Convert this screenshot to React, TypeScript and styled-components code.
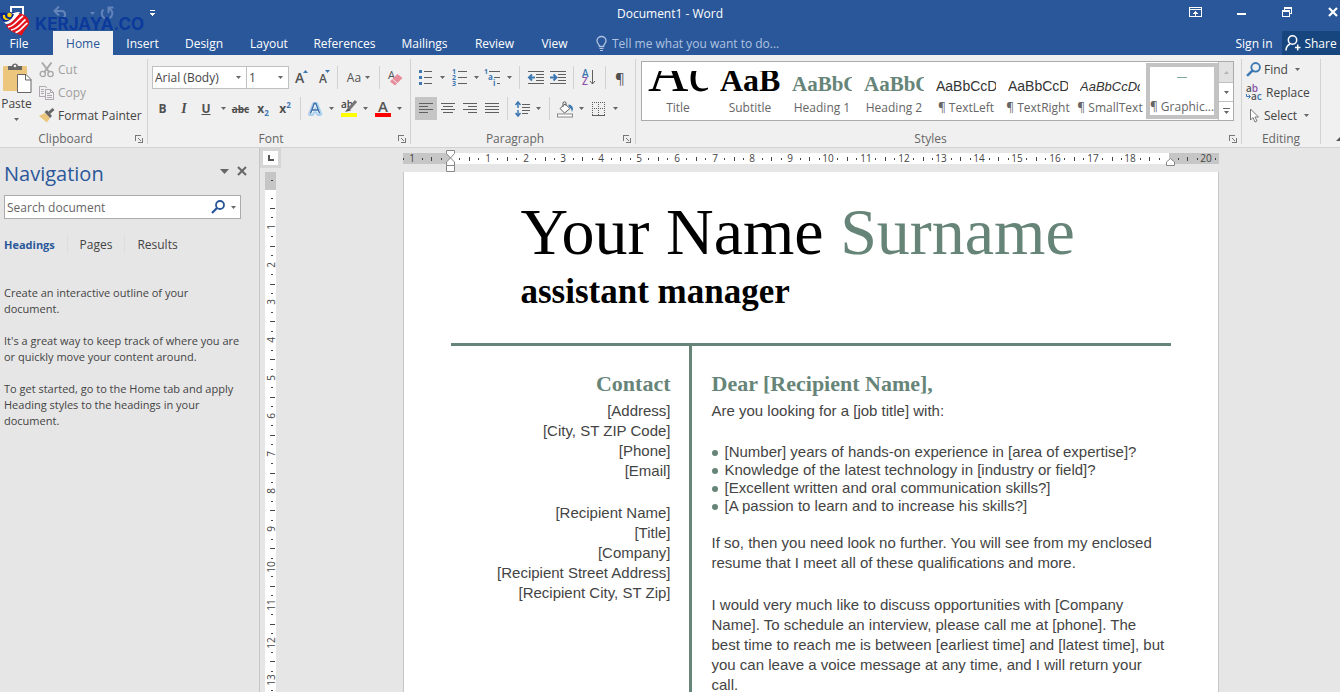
import React from 'react';
import styled, { createGlobalStyle, css } from 'styled-components';

const UI = '"Segoe UI", "Open Sans", "Noto Sans", sans-serif';
const SERIF = 'Georgia, "Liberation Serif", serif';
const SANS = 'Arial, "Liberation Sans", sans-serif';
const BLUE = '#2a579a';
const GREEN = '#668578';
const STEEL = '#3e78b3';
const INK = '#606060';

const GlobalStyle = createGlobalStyle`
  * { box-sizing: border-box; }
  body { margin: 0; font-family: ${UI}; font-size: 12px; color: #444; background: #e6e6e6; }
  button, input, select { font: inherit; color: inherit; }
  p, h1, h2, h3, ul { margin: 0; padding: 0; font-weight: normal; }
`;

const Window = styled.div`
  height: 100vh;
  display: flex;
  flex-direction: column;
  overflow: hidden;
  position: relative;
`;

/* ---------- title bar ---------- */
const plainButton = css`
  border: 0;
  padding: 0;
  background: none;
  display: flex;
  align-items: center;
  justify-content: center;
`;

const TitleBar = styled.header`
  height: 31px;
  flex: none;
  display: grid;
  grid-template-columns: 1fr auto 1fr;
  align-items: start;
  background: ${BLUE};
  color: #fff;
`;

const QuickAccess = styled.div`
  display: flex;
  align-items: center;
  height: 26px;
`;

const WindowControls = styled.div`
  display: flex;
  justify-content: flex-end;
  height: 26px;
`;

const ChromeButton = styled.button<{ $w: number }>`
  ${plainButton}
  width: ${p => p.$w}px;
  height: 24px;
  flex: none;
`;

const CloseButton = styled(ChromeButton)`
  justify-content: flex-end;
  padding-right: 2px;
`;

const DocTitle = styled.div`
  font-size: 12px;
  line-height: 28px;
`;

const Watermark = styled.div`
  position: absolute;
  left: 0;
  top: 11px;
  display: flex;
  align-items: center;
  gap: 5px;
  color: #0b3a9a;
  font: 700 17px/26px Inter, sans-serif;
  pointer-events: none;
`;

/* ---------- tab strip ---------- */
const TabStrip = styled.nav`
  height: 24px;
  flex: none;
  display: flex;
  background: ${BLUE};
  color: #fff;
`;

const Tab = styled.button<{ $w: number; $active?: boolean }>`
  ${plainButton}
  width: ${p => p.$w}px;
  height: 24px;
  background: ${p => (p.$active ? '#f0f0f0' : 'transparent')};
  color: ${p => (p.$active ? BLUE : '#fff')};
`;

const FileTab = styled(Tab)`
  margin-right: 15px;
`;

const TellMe = styled.label`
  flex: 1;
  display: flex;
  align-items: center;
  gap: 5px;
  padding-left: 14px;
  input {
    flex: 1;
    border: 0;
    padding: 0;
    background: none;
    outline: 0;
  }
  input::placeholder { color: #b0c3e0; opacity: 1; }
`;

const ShareButton = styled.button`
  ${plainButton}
  gap: 3px;
  width: 58px;
  background: #17457e;
  color: #fff;
`;

/* ---------- ribbon ---------- */
const Ribbon = styled.section`
  flex: none;
  height: 93px;
  display: flex;
  padding-top: 4px;
  background: #f0f0f0;
  border-bottom: 1px solid #d2d2d2;
`;

const Group = styled.div<{ $w?: number }>`
  ${p => (p.$w ? `width: ${p.$w}px; flex: none;` : 'flex: 1; min-width: 0;')}
  display: flex;
  flex-direction: column;
  height: 85px;
  border-right: 1px solid #d2d2d2;
`;

const GroupBody = styled.div`
  flex: 1;
  min-height: 0;
  display: flex;
`;

const GroupFooter = styled.div`
  height: 12px;
  display: flex;
  align-items: center;
  color: #666;
  margin-bottom: -1px;
  span { flex: 1; text-align: center; line-height: 12px; }
`;

const Launcher = styled.button`
  ${plainButton}
  width: 16px;
  height: 12px;
`;

const ToolRows = styled.div`
  padding: 7px 0 0 4px;
  display: flex;
  flex-direction: column;
  gap: 8px;
`;

const ToolRow = styled.div`
  height: 23px;
  display: flex;
  align-items: stretch;
`;

const Tool = styled.button<{ $w: number; $on?: boolean }>`
  ${plainButton}
  width: ${p => p.$w}px;
  gap: 4px;
  background: ${p => (p.$on ? '#c5c5c5' : 'none')};
`;

const Divider = styled.span<{ $w: number }>`
  width: ${p => p.$w}px;
  display: flex;
  justify-content: center;
  &::before { content: ''; width: 1px; background: #d2d2d2; }
`;

const Glyph = styled.span<{ $size?: number; $bold?: boolean; $italic?: boolean; $line?: string; $serif?: boolean }>`
  font-size: ${p => p.$size ?? 12}px;
  line-height: 16px;
  font-weight: ${p => (p.$bold ? 700 : 400)};
  font-style: ${p => (p.$italic ? 'italic' : 'normal')};
  text-decoration: ${p => p.$line ?? 'none'};
  font-family: ${p => (p.$serif ? '"Liberation Serif", serif' : 'inherit')};
  color: #505050;
  sub, sup { font-size: 8px; line-height: 0; color: ${STEEL}; }
`;

const Combo = styled.div<{ $w: number }>`
  width: ${p => p.$w}px;
  display: flex;
  align-items: center;
  padding-right: 5px;
  background: #fff;
  border: 1px solid #c0c0c0;
  & + & { margin-left: -1px; }
  select {
    appearance: none;
    flex: 1;
    min-width: 0;
    border: 0;
    background: none;
    padding: 0 0 0 2px;
    outline: 0;
  }
`;

const PasteButton = styled.button`
  ${plainButton}
  flex-direction: column;
  justify-content: flex-start;
  width: 35px;
  padding: 4px 2px 0 0;
  line-height: 16px;
  svg + span { margin: 3px 0 6px; }
`;

const StackedTools = styled.div`
  display: flex;
  flex-direction: column;
  padding-left: 4px;
  margin-top: -1px;
`;

const LabeledTool = styled.button<{ $dim?: boolean }>`
  ${plainButton}
  justify-content: flex-start;
  gap: 3px;
  height: 23px;
  white-space: nowrap;
  color: ${p => (p.$dim ? '#a0a0a0' : '#444')};
  svg:last-child:not(:first-child) { margin-left: 4px; }
`;

/* ---------- style gallery ---------- */
const Gallery = styled.div`
  flex: 1;
  min-width: 0;
  height: 60px;
  display: flex;
  margin: 2px 7px 0 5px;
  background: #fff;
  border: 1px solid #ababab;
`;

const StyleList = styled.div`
  flex: 1;
  min-width: 0;
  display: flex;
  overflow: hidden;
`;

const StyleCard = styled.button<{ $on?: boolean }>`
  ${plainButton}
  flex-direction: column;
  justify-content: flex-end;
  width: 72px;
  flex: none;
  padding: 0 ${p => (p.$on ? 1 : 5)}px ${p => (p.$on ? 0 : 4)}px;
  margin: ${p => (p.$on ? '1px 0' : '0')};
  border: ${p => (p.$on ? '4px solid #c3c3c3' : '0')};
  color: #666;
  white-space: nowrap;
`;

const Preview = styled.span<{ $size: number; $color: string; $serif?: boolean; $bold?: boolean; $italic?: boolean }>`
  width: 60px;
  height: 24px;
  overflow: hidden;
  display: flex;
  align-items: flex-end;
  font-family: ${p => (p.$serif ? SERIF : SANS)};
  font-size: ${p => p.$size}px;
  font-weight: ${p => (p.$bold ? 700 : 400)};
  font-style: ${p => (p.$italic ? 'italic' : 'normal')};
  line-height: ${p => Math.round(p.$size * 0.68) + 8}px;
  color: ${p => p.$color};
`;

const StyleName = styled.span`
  line-height: 16px;
  margin-top: 5px;
`;

const GalleryScroll = styled.div`
  width: 15px;
  display: grid;
  grid-template-rows: 20px 19px 19px;
  border-left: 1px solid #c0c0c0;
`;

const ScrollButton = styled.button<{ $off?: boolean }>`
  ${plainButton}
  background: ${p => (p.$off ? '#e1e1e1' : '#fff')};
  & + & { border-top: 1px solid #c0c0c0; }
`;

const RibbonEnd = styled.div`
  width: 19px;
  display: flex;
  align-items: flex-end;
  justify-content: flex-end;
  padding-bottom: 6px;
`;

/* ---------- work area ---------- */
const Workspace = styled.main`
  flex: 1;
  min-height: 0;
  display: flex;
  background: #e6e6e6;
`;

const NavPane = styled.aside`
  width: 260px;
  flex: none;
  padding: 11px 8px 0 4px;
  border-right: 1px solid #c6c6c6;
`;

const NavHeader = styled.div`
  display: flex;
  align-items: center;
  height: 30px;
  h2 { flex: 1; font-size: 20px; font-weight: 400; line-height: 30px; color: ${BLUE}; }
`;

const NavIcon = styled.button`
  ${plainButton}
  width: 18px;
  height: 18px;
  margin-bottom: 6px;
`;

const SearchBox = styled.div`
  display: flex;
  align-items: center;
  height: 24px;
  margin: 6px 10px 0 0;
  padding: 0 4px 0 2px;
  background: #fff;
  border: 1px solid #ababab;
  input { flex: 1; min-width: 0; border: 0; padding: 0; outline: 0; background: none; }
  input::placeholder { color: #666; opacity: 1; }
`;

const SearchButton = styled.button`
  ${plainButton}
  margin-right: 6px;
`;

const NavTabs = styled.div`
  display: flex;
  margin: 15px 0 31px;
  height: 20px;
`;

const NavTab = styled.button<{ $w: number; $active?: boolean }>`
  ${plainButton}
  width: ${p => p.$w}px;
  justify-content: ${p => (p.$active ? 'flex-start' : 'center')};
  color: ${p => (p.$active ? BLUE : '#444')};
  font-size: ${p => (p.$active ? 11 : 12)}px;
  font-weight: ${p => (p.$active ? 700 : 400)};
  & + & { border-left: 1px solid #dedede; }
`;

const NavText = styled.p`
  font-size: 11px;
  line-height: 16px;
  margin: 0 8px 16px 0;
`;

const RulerColumn = styled.div`
  width: 21px;
  flex: none;
  display: flex;
  flex-direction: column;
  align-items: center;
`;

const TabStop = styled.button`
  ${plainButton}
  width: 21px;
  height: 20px;
  flex: none;
  margin-bottom: 4px;
  border: 3px solid #d6d6d6;
  background: #fdfdfd;
`;

const VerticalRuler = styled.div`
  flex: 1;
  min-height: 0;
  overflow: hidden;
  svg { display: block; }
`;

const Canvas = styled.div`
  flex: 1;
  min-width: 0;
  display: flex;
  flex-direction: column;
  align-items: center;
`;

const HorizontalRuler = styled.div`
  flex: none;
  height: 24px;
  padding-top: 2px;
  svg { display: block; }
`;

const Page = styled.article`
  flex: 1 0 auto;
  width: 816px;
  padding: 23px 47px 0;
  background: #fff;
  border: solid #c6c6c6;
  border-width: 0 1px;
  font-family: ${SANS};
  font-size: 15px;
  line-height: 20px;
`;

const NameLine = styled.h1`
  padding-left: 70px;
  font-family: ${SERIF};
  font-size: 66px;
  line-height: 74px;
  color: #000;
  white-space: nowrap;
  span { color: ${GREEN}; }
`;

const RoleLine = styled.h2`
  padding-left: 70px;
  margin-top: 2px;
  font-family: ${SERIF};
  font-size: 35px;
  font-weight: 700;
  line-height: 42px;
  color: #000;
`;

const Columns = styled.div`
  display: grid;
  grid-template-columns: 241px 1fr;
  margin-top: 30px;
  border-top: 3px solid ${GREEN};
`;

const ContactColumn = styled.section`
  padding: 25px 18px 0 0;
  min-height: 360px;
  border-right: 3px solid ${GREEN};
  text-align: right;
`;

const LetterColumn = styled.section`
  padding: 25px 4px 0 20px;
`;

const SectionHeading = styled.h3`
  font-family: ${SERIF};
  font-size: 22px;
  font-weight: 700;
  line-height: 25px;
  margin-bottom: 5px;
  color: ${GREEN};
`;

const Block = styled.p`
  margin-bottom: 22px;
  white-space: pre-line;
`;

const BulletList = styled.ul`
  list-style: none;
  line-height: 18px;
  margin-bottom: 18px;
  li { display: flex; align-items: center; gap: 7px; }
  li::before { content: ''; width: 6px; height: 6px; margin-top: 2px; border-radius: 3px; background: ${GREEN}; }
`;

/* ---------- icons ---------- */
const Drawing = styled.svg`
  flex: none;
  overflow: visible;
`;

type IconProps = { w: number; h: number; children: React.ReactNode; crisp?: boolean };
const Icon = ({ w, h, children, crisp }: IconProps) => (
  <Drawing width={w} height={h} viewBox={`0 0 ${w} ${h}`} fill="none" aria-hidden="true" shapeRendering={crisp ? 'crispEdges' : undefined}>
    {children}
  </Drawing>
);

const Caret = ({ color = '#666', w = 5 }: { color?: string; w?: number }) => {
  const h = Math.ceil(w / 2);
  return <Icon w={w} h={h}><path d={`M0 0H${w}L${w / 2} ${h}Z`} fill={color} /></Icon>;
};

const LauncherIcon = () => (
  <Icon w={8} h={8} crisp>
    <path d="M0.500 6V0.500H6" stroke="#777" />
    <path d="M3 3L6 6M7.500 3V7.500H3" stroke="#777" />
  </Icon>
);

const FlagLogo = () => (
  <Icon w={30} h={26}>
    <path d="M6 14C12 13 15 6 20 2.500C25 3 30 8 29 13C27 17 24 19 22 24.500C18 23 9 21 6 14Z" fill="#e3131b" />
    <path d="M8 16C15 15 18 8 23 5M11 19C18 18 21 12 25.500 8.500M15.500 21.500C21 20 23 15 27.500 12" stroke="#fff" strokeWidth="1.600" />
    <path d="M0 2C5 0 9 4 12 1L17 2C14 7 11 12 5 11C2 9 0 7 0 2Z" fill="#10298e" />
    <path d="M11 2C14 3 17 0 20 1.500C16 5 13 13 6 13L4 11C10 11 13 6 14 3.500Z" fill="#fff" />
    <path d="M3 4C2 9 7 10 10 8C7 8 5 7 5 4Z" fill="#ffd500" />
    <circle cx="9.500" cy="4" r="2.300" fill="#ffd500" />
  </Icon>
);

const SaveIcon = () => (
  <Icon w={14} h={14} crisp>
    <path d="M1 1H13V13H3L1 11Z" stroke="#fff" strokeWidth="2" />
    <path d="M4 8H10V13H4Z" fill="#fff" />
  </Icon>
);

const UndoIcon = () => (
  <Icon w={15} h={14}>
    <path d="M1.500 5H9.500A4 4 0 0 1 9.500 12.500H8M6 0.500L1.500 5L6 9.500" stroke="#6284ba" strokeWidth="2" />
  </Icon>
);

const RedoIcon = () => (
  <Icon w={14} h={14}>
    <path d="M9.500 2.700A5.300 5.300 0 1 1 3.500 3.500M8.500 7V1.500H13.500" stroke="#6284ba" strokeWidth="2" />
  </Icon>
);

const CustomizeIcon = () => (
  <Icon w={5} h={6} crisp><path d="M0 0H5V1H0Z" fill="#fff" /><path d="M0 3H5L2.500 6Z" fill="#fff" /></Icon>
);

const PasteIcon = () => (
  <Icon w={29} h={30}>
    <rect x="1" y="3" width="24" height="25" rx="1" fill="#ebc67c" />
    <path d="M6 7V3H10C10 -0.500 16 -0.500 16 3H20V7Z" fill="#666" />
    <circle cx="13" cy="3" r="1.300" fill="#f0f0f0" />
    <path d="M15.500 11.500H24L29 16.500V29.500H15.500Z" fill="#fff" stroke="#666" />
    <path d="M23.500 11.500V17H29" stroke="#666" />
  </Icon>
);

const CutIcon = () => (
  <Icon w={16} h={16}>
    <path d="M3 0.500L10.500 10.500M12.500 0.500L5 10.500" stroke="#a8a8a8" strokeWidth="2" />
    <circle cx="3.800" cy="12" r="2.600" stroke="#a8a8a8" strokeWidth="1.400" />
    <circle cx="11.500" cy="12" r="2.600" stroke="#a8a8a8" strokeWidth="1.400" />
  </Icon>
);

const CopyIcon = () => (
  <Icon w={16} h={16} crisp>
    <path d="M5.500 11.500H0.500V1.500H6.500L8.500 3.500" stroke="#b0a8b0" />
    <path d="M2 4.500H5M2 6.500H5M2 8.500H5" stroke="#b0a8b0" />
    <path d="M6.500 4.500H11.500L14.500 7.500V14.500H6.500ZM11.500 4.500V7.500H14.500M8 8.500H11M8 10.500H13M8 12.500H13" stroke="#b0a8b0" />
  </Icon>
);

const PainterIcon = () => (
  <Icon w={16} h={15}>
    <path d="M0 8L6 5L11 10L8 14.500Z" fill="#ebc67c" />
    <path d="M5.500 4L8 2L13 8L11 10Z" fill="#666" />
    <path d="M10 5L14.500 1" stroke="#666" strokeWidth="3" />
  </Icon>
);

const GrowIcon = ({ up }: { up?: boolean }) => (
  <Icon w={up ? 13 : 11} h={15}>
    <text x="0" y="13" fontFamily="Open Sans, sans-serif" fontSize={up ? 14 : 12} fontWeight="600" fill="#555">A</text>
    <path d={up ? 'M8 3H13L10.500 0Z' : 'M6 0H11L8.500 3Z'} fill={STEEL} />
  </Icon>
);

const ClearIcon = () => (
  <Icon w={16} h={16}>
    <text x="1" y="9" fontFamily="Open Sans, sans-serif" fontSize="11" fill="#555">A</text>
    <path d="M10.500 4L15.500 8L8 15.500L3 11.500Z" fill="#e88b9b" />
    <path d="M5.500 9L10.500 13.500" stroke="#f0f0f0" />
  </Icon>
);

const EffectsIcon = () => (
  <Icon w={14} h={17}>
    <text x="2" y="14" fontFamily="Open Sans, sans-serif" fontSize="15" fontWeight="600" fill="#fff" stroke="#a9cdec" strokeWidth="4" strokeLinejoin="round" paintOrder="stroke">A</text>
    <path d="M2.500 13.500L6.300 3.500H7.800L11.600 13.500M4 10H10" stroke="#3a6da6" strokeWidth="1.300" />
  </Icon>
);

const HighlightIcon = () => (
  <Icon w={16} h={17}>
    <text x="0" y="8" fontFamily="Open Sans, sans-serif" fontSize="10" fontWeight="600" fill="#444">ab</text>
    <path d="M15 1L8 9" stroke="#777" strokeWidth="3" />
    <path d="M7 8L4 12L10 10.500Z" fill="#555" />
    <rect y="13" width="16" height="4" fill="#ff0" />
  </Icon>
);

const FontColorIcon = () => (
  <Icon w={16} h={17}>
    <text x="3" y="12" fontFamily="Open Sans, sans-serif" fontSize="15" fontWeight="600" fill="#555">A</text>
    <rect y="13" width="16" height="4" fill="#f00" />
  </Icon>
);

const BulletsIcon = () => (
  <Icon w={14} h={16} crisp>
    <path d="M0 0H3V3H0ZM0 6H3V9H0ZM0 12H3V15H0Z" fill={STEEL} />
    <path d="M5 1.500H13M5 7.500H13M5 13.500H13" stroke={INK} />
  </Icon>
);

const NumberingIcon = () => (
  <Icon w={15} h={17}>
    {[1, 2, 3].map(n => (
      <text key={n} x="0" y={n * 6 - 1} fontFamily="Open Sans, sans-serif" fontSize="7" fontWeight="700" fill={STEEL}>{n}</text>
    ))}
    <path d="M6 2.500H15M6 8.500H15M6 14.500H15" stroke={INK} shapeRendering="crispEdges" />
  </Icon>
);

const MultilevelIcon = () => (
  <Icon w={17} h={17}>
    <text x="0" y="5" fontFamily="Open Sans, sans-serif" fontSize="7" fontWeight="700" fill={STEEL}>1</text>
    <text x="4" y="11" fontFamily="Open Sans, sans-serif" fontSize="8" fontWeight="700" fill={STEEL}>a</text>
    <text x="9" y="17" fontFamily="Open Sans, sans-serif" fontSize="8" fontWeight="700" fill={STEEL}>i</text>
    <path d="M5 2.500H16M10 8.500H16M13 14.500H16" stroke={INK} shapeRendering="crispEdges" />
  </Icon>
);

const IndentIcon = ({ out }: { out?: boolean }) => (
  <Icon w={16} h={14} crisp>
    <path d="M0 0.500H16M8 3.500H16M8 6.500H16M8 9.500H16M0 12.500H16" stroke={INK} />
    <g shapeRendering="auto">
      <path d={out ? 'M7 6.500H1M4 3.500L1 6.500L4 9.500' : 'M0 6.500H6M3.500 3.500L6.500 6.500L3.500 9.500'} stroke={STEEL} strokeWidth="2" />
    </g>
  </Icon>
);

const SortIcon = () => (
  <Icon w={14} h={17}>
    <text x="0" y="8" fontFamily="Open Sans, sans-serif" fontSize="10" fontWeight="600" fill={STEEL}>A</text>
    <text x="0" y="16" fontFamily="Open Sans, sans-serif" fontSize="10" fontWeight="600" fill="#8a50a8">Z</text>
    <path d="M10.500 1V15M8 12L10.500 15L13 12" stroke={INK} />
  </Icon>
);

const AlignIcon = ({ rows }: { rows: [number, number][] }) => (
  <Icon w={14} h={12} crisp>
    {rows.map(([x, w], i) => <path key={i} d={`M${x} ${i * 3 + 0.5}h${w}`} stroke={INK} />)}
  </Icon>
);

const SpacingIcon = () => (
  <Icon w={15} h={16}>
    <path d="M3 1V7M3 9V15M0.500 4L3 1L5.500 4M0.500 12L3 15L5.500 12" stroke={STEEL} strokeWidth="1.500" />
    <path d="M7 3.500H15M7 6.500H15M7 9.500H15M7 12.500H13" stroke={INK} shapeRendering="crispEdges" />
  </Icon>
);

const ShadingIcon = () => (
  <Icon w={17} h={16}>
    <path d="M8 3L13 7.500L7.500 12L3 7.500Z" fill="#fff" stroke={INK} />
    <path d="M6 6V1.500Q7.500 0 9 1.500V5" stroke={INK} />
    <path d="M11.500 3.500C16 4 17 7.500 15 11C14.500 8.500 13.500 6.500 11.500 5.500Z" fill={STEEL} />
    <rect x="0.500" y="13" width="15" height="3" fill="#fff" stroke="#888" />
  </Icon>
);

const BordersIcon = () => (
  <Icon w={13} h={14} crisp>
    <path d="M0 0.500H13M0 6.500H13M0.500 0V13M6.500 0V13M12.500 0V13" stroke={INK} strokeDasharray="1 1" />
    <path d="M0 13.500H13" stroke={INK} />
  </Icon>
);

const MagnifierIcon = ({ color, size = 14 }: { color: string; size?: number }) => (
  <svg width={size} height={size} viewBox="0 0 14 14" fill="none" aria-hidden="true">
    <circle cx="9" cy="5" r="4" stroke={color} strokeWidth="1.800" />
    <path d="M6 8L1 13" stroke={color} strokeWidth="2.300" />
  </svg>
);

const ReplaceIcon = () => (
  <Icon w={17} h={16}>
    <text x="0" y="7" fontFamily="Open Sans, sans-serif" fontSize="10" fontWeight="600" fill="#555">a<tspan fill="#8a50a8">b</tspan></text>
    <text x="5" y="15" fontFamily="Open Sans, sans-serif" fontSize="10" fontWeight="600" fill="#555">a<tspan fill={STEEL}>c</tspan></text>
    <path d="M0.500 9V11.500H4M2.500 9.500L4.500 11.500L2.500 13.500" stroke={STEEL} />
  </Icon>
);

const CursorIcon = () => (
  <Icon w={15} h={15}>
    <path d="M4.500 1V12L7 9.500L9 14L11 13L9 9H12.500Z" fill="#fff" stroke="#777" />
  </Icon>
);

const BulbIcon = () => (
  <Icon w={11} h={15}>
    <path d="M3.500 10.500C3.500 8.500 1 7.500 1 4.700A4.500 4.200 0 0 1 10 4.700C10 7.500 7.500 8.500 7.500 10.500Z" stroke="#b0c3e0" strokeWidth="1.300" />
    <path d="M3.500 12.500H7.500M4 14.500H7" stroke="#b0c3e0" />
  </Icon>
);

const PersonIcon = () => (
  <Icon w={16} h={16}>
    <circle cx="7.500" cy="5" r="4.200" stroke="#fff" strokeWidth="1.500" />
    <path d="M1 15.500C1 12 3 10 5 9M10 12.500H15.500M12.700 9.500V15.500" stroke="#fff" strokeWidth="1.500" />
  </Icon>
);

/* ---------- rulers ---------- */
const CM = 37.8;
const rulerFont = { fontFamily: 'Open Sans, sans-serif', fontSize: 10, fill: '#444', textAnchor: 'middle' as const };

function PageRuler() {
  const marks = Array.from({ length: 88 }, (_, i) => i - 5);
  return (
    <svg width="816" height="22" viewBox="0 0 816 22" aria-hidden="true">
      <rect y="3" width="816" height="11" fill="#c6c6c6" />
      <rect x="48" y="3" width="718" height="11" fill="#fff" />
      {marks.map(q => {
        const x = Math.round(47 + (q * CM) / 4);
        if (x > 813 || x < 0) return null;
        if (q % 4 === 0) {
          const n = Math.abs(q / 4);
          return n === 0 || n === 19 ? null : <text key={q} x={x} y="12" {...rulerFont}>{n}</text>;
        }
        return q % 2 === 0
          ? <rect key={q} x={x} y="7" width="1" height="4" fill="#444" />
          : <rect key={q} x={x} y="8" width="1" height="2" fill="#444" />;
      })}
      <path d="M43.500 0.500H51.500V3.500L47.500 8L43.500 3.500ZM47.500 8L51.500 12V15.500H43.500V12Z" fill="#fff" stroke="#888" />
      <path d="M43.500 15.500H51.500V21.500H43.500Z" fill="#fff" stroke="#888" />
      <path d="M763.500 15.500V12L767.500 8.500L771.500 12V15.500Z" fill="#fff" stroke="#888" />
    </svg>
  );
}

function SideRuler() {
  const marks = Array.from({ length: 110 }, (_, i) => i - 1);
  return (
    <svg width="11" height="1050" viewBox="0 0 11 1050" aria-hidden="true">
      <rect width="11" height="1050" fill="#fff" />
      <rect width="11" height="18" fill="#c6c6c6" />
      {marks.map(q => {
        const y = Math.round(17 + (q * CM) / 4);
        if (q === 0) return null;
        if (q % 4 === 0) return <text key={q} transform={`translate(10 ${y}) rotate(-90)`} {...rulerFont}>{q / 4}</text>;
        return q % 2 === 0
          ? <rect key={q} x="5" y={y} width="5" height="1" fill="#444" />
          : <rect key={q} x="6" y={y} width="2" height="1" fill="#444" />;
      })}
    </svg>
  );
}

/* ---------- data ---------- */
const tabs: [string, number][] = [
  ['Home', 60], ['Insert', 59], ['Design', 64], ['Layout', 66], ['References', 85], ['Mailings', 75], ['Review', 65], ['View', 55],
];

const styleCards = [
  { name: 'Title', sample: 'Ad', size: 56, color: '#000', serif: true },
  { name: 'Subtitle', sample: 'AaB', size: 32, color: '#000', serif: true, bold: true },
  { name: 'Heading 1', sample: 'AaBbC', size: 21, color: GREEN, serif: true, bold: true },
  { name: 'Heading 2', sample: 'AaBbC', size: 21, color: GREEN, serif: true, bold: true },
  { name: '¶ TextLeft', sample: 'AaBbCcDd', size: 14, color: '#333' },
  { name: '¶ TextRight', sample: 'AaBbCcDd', size: 14, color: '#333' },
  { name: '¶ SmallText', sample: 'AaBbCcDd', size: 13, color: '#333', italic: true },
];

const alignments: { label: string; rows: [number, number][] }[] = [
  { label: 'Align left', rows: [[0, 14], [0, 9], [0, 14], [0, 9]] },
  { label: 'Center', rows: [[0, 14], [2, 10], [0, 14], [2, 10]] },
  { label: 'Align right', rows: [[0, 14], [5, 9], [0, 14], [5, 9]] },
  { label: 'Justify', rows: [[0, 14], [0, 14], [0, 14], [0, 14]] },
];

const DropTool = ({ w, label }: { w: number; label: string }) => (
  <Tool $w={w} aria-label={label}><Caret /></Tool>
);

const Footer = ({ label, launcher = true }: { label: string; launcher?: boolean }) => (
  <GroupFooter>
    <span>{label}</span>
    {launcher && <Launcher aria-label={`${label} settings`}><LauncherIcon /></Launcher>}
  </GroupFooter>
);

export default function App() {
  return (
    <Window>
      <GlobalStyle />
      <TitleBar>
        <QuickAccess>
          <ChromeButton $w={34} aria-label="Save"><SaveIcon /></ChromeButton>
          <ChromeButton $w={52} aria-label="Undo"><UndoIcon /></ChromeButton>
          <ChromeButton $w={12} aria-label="Undo history"><Caret color="#6284ba" /></ChromeButton>
          <ChromeButton $w={18} aria-label="Redo"><RedoIcon /></ChromeButton>
          <ChromeButton $w={72} aria-label="Customize toolbar"><CustomizeIcon /></ChromeButton>
        </QuickAccess>
        <DocTitle>Document1 - Word</DocTitle>
        <WindowControls>
          <ChromeButton $w={46} aria-label="Ribbon display options">
            <Icon w={13} h={10} crisp>
              <path d="M0.500 0.500H12.500V9.500H0.500ZM0 2.500H13" stroke="#fff" />
              <path d="M6.500 4V9M4 6.500H9M5 5.500H8" stroke="#fff" />
            </Icon>
          </ChromeButton>
          <ChromeButton $w={46} aria-label="Minimize">
            <Icon w={9} h={6} crisp><rect y="4" width="9" height="2" fill="#fff" /></Icon>
          </ChromeButton>
          <ChromeButton $w={46} aria-label="Restore">
            <Icon w={10} h={10} crisp>
              <path d="M2.500 3V0.500H9.500V6.500H7M2 1.500H10M0.500 3.500H7.500V9.500H0.500ZM0 4.500H8" stroke="#fff" />
            </Icon>
          </ChromeButton>
          <CloseButton $w={30} aria-label="Close">
            <Icon w={10} h={10}><path d="M1 1L9 9M9 1L1 9" stroke="#fff" strokeWidth="2.200" /></Icon>
          </CloseButton>
        </WindowControls>
      </TitleBar>

      <TabStrip>
        <FileTab $w={38}>File</FileTab>
        {tabs.map(([name, w]) => <Tab key={name} $w={w} $active={name === 'Home'}>{name}</Tab>)}
        <TellMe>
          <BulbIcon />
          <input aria-label="Tell me" placeholder="Tell me what you want to do..." />
        </TellMe>
        <Tab $w={56}>Sign in</Tab>
        <ShareButton><PersonIcon />Share</ShareButton>
      </TabStrip>

      <Watermark><FlagLogo />KERJAYA.CO</Watermark>

      <Ribbon>
        <Group $w={148}>
          <GroupBody>
            <PasteButton><PasteIcon /><span>Paste</span><Caret /></PasteButton>
            <StackedTools>
              <LabeledTool $dim><CutIcon />Cut</LabeledTool>
              <LabeledTool $dim><CopyIcon />Copy</LabeledTool>
              <LabeledTool><PainterIcon />Format Painter</LabeledTool>
            </StackedTools>
          </GroupBody>
          <Footer label="Clipboard" />
        </Group>

        <Group $w={263}>
          <GroupBody>
            <ToolRows>
              <ToolRow>
                <Combo $w={95}><select aria-label="Font"><option>Arial (Body)</option></select><Caret /></Combo>
                <Combo $w={43}><select aria-label="Font size"><option>1</option></select><Caret /></Combo>
                <Tool $w={24} aria-label="Grow font"><GrowIcon up /></Tool>
                <Tool $w={22} aria-label="Shrink font"><GrowIcon /></Tool>
                <Divider $w={5} />
                <Tool $w={37}><Glyph>Aa</Glyph><Caret /></Tool>
                <Divider $w={5} />
                <Tool $w={26} aria-label="Clear formatting"><ClearIcon /></Tool>
              </ToolRow>
              <ToolRow>
                <Tool $w={21}><Glyph $bold>B</Glyph></Tool>
                <Tool $w={22}><Glyph $bold $italic $serif $size={14}>I</Glyph></Tool>
                <Tool $w={22}><Glyph $bold $line="underline">U</Glyph></Tool>
                <DropTool w={12} label="Underline style" />
                <Tool $w={23}><Glyph $size={10} $bold $line="line-through">abc</Glyph></Tool>
                <Tool $w={22}><Glyph $bold>x<sub>2</sub></Glyph></Tool>
                <Tool $w={22}><Glyph $bold>x<sup>2</sup></Glyph></Tool>
                <Divider $w={8} />
                <Tool $w={22} aria-label="Text effects"><EffectsIcon /></Tool>
                <DropTool w={11} label="Text effect options" />
                <Tool $w={23} aria-label="Highlight"><HighlightIcon /></Tool>
                <DropTool w={11} label="Highlight colors" />
                <Tool $w={23} aria-label="Font color"><FontColorIcon /></Tool>
                <DropTool w={11} label="Font colors" />
              </ToolRow>
            </ToolRows>
          </GroupBody>
          <Footer label="Font" />
        </Group>

        <Group $w={225}>
          <GroupBody>
            <ToolRows>
              <ToolRow>
                <Tool $w={22} aria-label="Bullets"><BulletsIcon /></Tool>
                <DropTool w={11} label="Bullet library" />
                <Tool $w={23} aria-label="Numbering"><NumberingIcon /></Tool>
                <DropTool w={10} label="Numbering library" />
                <Tool $w={23} aria-label="Multilevel list"><MultilevelIcon /></Tool>
                <DropTool w={10} label="List library" />
                <Divider $w={11} />
                <Tool $w={22} aria-label="Decrease indent"><IndentIcon out /></Tool>
                <Tool $w={22} aria-label="Increase indent"><IndentIcon /></Tool>
                <Divider $w={8} />
                <Tool $w={24} aria-label="Sort"><SortIcon /></Tool>
                <Divider $w={8} />
                <Tool $w={22}><Glyph $size={15}>¶</Glyph></Tool>
              </ToolRow>
              <ToolRow>
                {alignments.map((a, i) => (
                  <Tool key={a.label} $w={22} $on={i === 0} aria-label={a.label}><AlignIcon rows={a.rows} /></Tool>
                ))}
                <Divider $w={8} />
                <Tool $w={22} aria-label="Line spacing"><SpacingIcon /></Tool>
                <DropTool w={10} label="Line spacing options" />
                <Divider $w={12} />
                <Tool $w={21} aria-label="Shading"><ShadingIcon /></Tool>
                <DropTool w={11} label="Shading colors" />
                <Tool $w={23} aria-label="Borders"><BordersIcon /></Tool>
                <DropTool w={11} label="Border options" />
              </ToolRow>
            </ToolRows>
          </GroupBody>
          <Footer label="Paragraph" />
        </Group>

        <Group>
          <GroupBody>
            <Gallery>
              <StyleList>
                {styleCards.map(c => (
                  <StyleCard key={c.name}>
                    <Preview $size={c.size} $color={c.color} $serif={c.serif} $bold={c.bold} $italic={c.italic}>{c.sample}</Preview>
                    <StyleName>{c.name}</StyleName>
                  </StyleCard>
                ))}
                <StyleCard $on>
                  <Icon w={10} h={24} crisp><path d="M0 7.500H10" stroke="#7fa8a0" /></Icon>
                  <StyleName>¶ Graphic...</StyleName>
                </StyleCard>
              </StyleList>
              <GalleryScroll>
                <ScrollButton $off aria-label="Previous styles"><Icon w={5} h={3}><path d="M0 3H5L2.500 0Z" fill="#b5b5b5" /></Icon></ScrollButton>
                <ScrollButton aria-label="Next styles"><Caret /></ScrollButton>
                <ScrollButton aria-label="All styles"><Icon w={7} h={7}><path d="M0 0.500H7" stroke="#666" /><path d="M1 3H6L3.500 6Z" fill="#666" /></Icon></ScrollButton>
              </GalleryScroll>
            </Gallery>
          </GroupBody>
          <Footer label="Styles" />
        </Group>

        <Group $w={79}>
          <GroupBody>
            <StackedTools>
              <LabeledTool><MagnifierIcon color={STEEL} size={15} />Find<Caret /></LabeledTool>
              <LabeledTool><ReplaceIcon />Replace</LabeledTool>
              <LabeledTool><CursorIcon />Select<Caret /></LabeledTool>
            </StackedTools>
          </GroupBody>
          <Footer label="Editing" launcher={false} />
        </Group>
        <RibbonEnd><Icon w={4} h={4}><path d="M0 4L4 0V4Z" fill="#555" /></Icon></RibbonEnd>
      </Ribbon>

      <Workspace>
        <NavPane>
          <NavHeader>
            <h2>Navigation</h2>
            <NavIcon aria-label="Pane options"><Caret w={9} /></NavIcon>
            <NavIcon aria-label="Close pane"><Icon w={10} h={10}><path d="M1 1L9 9M9 1L1 9" stroke="#666" strokeWidth="2" /></Icon></NavIcon>
          </NavHeader>
          <SearchBox>
            <input aria-label="Search document" placeholder="Search document" />
            <SearchButton aria-label="Search"><MagnifierIcon color={BLUE} /></SearchButton>
            <Caret />
          </SearchBox>
          <NavTabs>
            <NavTab $w={63} $active>Headings</NavTab>
            <NavTab $w={57}>Pages</NavTab>
            <NavTab $w={66}>Results</NavTab>
          </NavTabs>
          <NavText>Create an interactive outline of your document.</NavText>
          <NavText>It's a great way to keep track of where you are or quickly move your content around.</NavText>
          <NavText>To get started, go to the Home tab and apply Heading styles to the headings in your document.</NavText>
        </NavPane>

        <RulerColumn>
          <TabStop aria-label="Tab stop"><Icon w={6} h={6} crisp><path d="M1 0V5H6" stroke="#555" strokeWidth="2" /></Icon></TabStop>
          <VerticalRuler><SideRuler /></VerticalRuler>
        </RulerColumn>

        <Canvas>
          <HorizontalRuler><PageRuler /></HorizontalRuler>
          <Page>
            <NameLine>Your Name <span>Surname</span></NameLine>
            <RoleLine>assistant manager</RoleLine>
            <Columns>
              <ContactColumn>
                <SectionHeading>Contact</SectionHeading>
                <Block>{'[Address]\n[City, ST ZIP Code]\n[Phone]\n[Email]'}</Block>
                <Block>{'[Recipient Name]\n[Title]\n[Company]\n[Recipient Street Address]\n[Recipient City, ST Zip]'}</Block>
              </ContactColumn>
              <LetterColumn>
                <SectionHeading>Dear [Recipient Name],</SectionHeading>
                <Block>Are you looking for a [job title] with:</Block>
                <BulletList>
                  <li>[Number] years of hands-on experience in [area of expertise]?</li>
                  <li>Knowledge of the latest technology in [industry or field]?</li>
                  <li>[Excellent written and oral communication skills?]</li>
                  <li>[A passion to learn and to increase his skills?]</li>
                </BulletList>
                <Block>If so, then you need look no further. You will see from my enclosed resume that I meet all of these qualifications and more.</Block>
                <Block>I would very much like to discuss opportunities with [Company Name]. To schedule an interview, please call me at [phone]. The best time to reach me is between [earliest time] and [latest time], but you can leave a voice message at any time, and I will return your call.</Block>
              </LetterColumn>
            </Columns>
          </Page>
        </Canvas>
      </Workspace>
    </Window>
  );
}
